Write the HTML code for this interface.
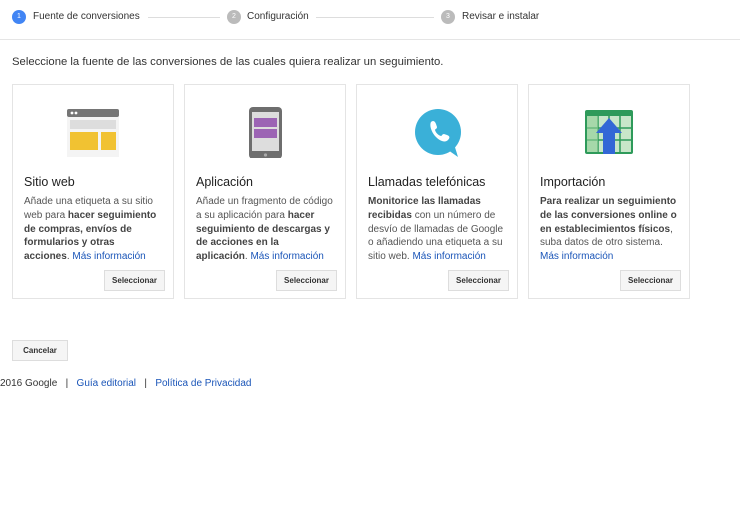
<!DOCTYPE html><html><head><meta charset="utf-8"><style>
body{margin:0;width:740px;height:509px;background:#fff;font-family:"Liberation Sans",sans-serif;color:#333;position:relative;overflow:hidden}
.a{position:absolute}
.step{font-size:10px;color:#333;top:11px}
.c{width:14px;height:14px;border-radius:50%;color:#fff;font-size:7px;text-align:center;line-height:14px;top:10px}
.ln{height:1px;background:#ddd;top:17px}
.card{top:84px;width:162px;height:215px;border:1px solid #e4e4e4;box-sizing:border-box}
.card h3{position:absolute;left:11px;top:90px;margin:0;font-weight:normal;font-size:12.5px;color:#222}
.card p{position:absolute;left:11px;top:110px;width:138px;margin:0;font-size:10px;line-height:13.8px;color:#555}
.card b{color:#444}
.card span{color:#1a55b8}
.btn{position:absolute;right:8px;top:185px;width:61px;height:21px;background:#f5f5f5;border:1px solid #ddd;box-sizing:border-box;font-size:8px;font-weight:bold;text-align:center;line-height:20px;color:#333}
.ic{position:absolute;left:51px;top:21px}
</style></head><body>
<div class="a c" style="left:12px;background:#4285f4">1</div>
<div class="a step" style="left:33px">Fuente de conversiones</div>
<div class="a ln" style="left:148px;width:72px"></div>
<div class="a c" style="left:227px;background:#bbb">2</div>
<div class="a step" style="left:247px">Configuración</div>
<div class="a ln" style="left:316px;width:118px"></div>
<div class="a c" style="left:441px;background:#bbb">3</div>
<div class="a step" style="left:462px">Revisar e instalar</div>
<div class="a" style="left:0;top:39px;width:740px;height:1px;background:#e5e5e5"></div>
<div class="a" style="left:12px;top:56px;font-size:11.3px;color:#333">Seleccione la fuente de las conversiones de las cuales quiera realizar un seguimiento.</div>

<div class="a card" style="left:12px">
<svg class="ic" width="60" height="52" viewBox="0 0 60 52"><rect x="3" y="3" width="52" height="48" fill="#f4f4f4"/><rect x="3" y="3" width="52" height="8" rx="2" fill="#757575"/><circle cx="8" cy="7" r="1.4" fill="#fff"/><circle cx="12" cy="7" r="1.4" fill="#fff"/><rect x="6" y="14" width="46" height="9" fill="#ddd"/><rect x="6" y="26" width="28" height="18" fill="#f1c232"/><rect x="37" y="26" width="15" height="18" fill="#f1c232"/></svg>
<h3>Sitio web</h3>
<p>Añade una etiqueta a su sitio web para <b>hacer seguimiento de compras, envíos de formularios y otras acciones</b>. <span>Más información</span></p>
<div class="btn">Seleccionar</div></div>

<div class="a card" style="left:184px">
<svg class="ic" width="60" height="52" viewBox="0 0 60 52"><rect x="13" y="1" width="33" height="52" rx="4" fill="#6e6e6e"/><rect x="16" y="6" width="27" height="39" fill="#ddd"/><rect x="18" y="12" width="23" height="9" fill="#9c64b4"/><rect x="18" y="23" width="23" height="9" fill="#9c64b4"/><circle cx="29.5" cy="49" r="1.6" fill="#aaa"/></svg>
<h3>Aplicación</h3>
<p>Añade un fragmento de código a su aplicación para <b>hacer seguimiento de descargas y de acciones en la<br>aplicación</b>. <span>Más información</span></p>
<div class="btn">Seleccionar</div></div>

<div class="a card" style="left:356px">
<svg class="ic" width="60" height="52" viewBox="0 0 60 52"><circle cx="30" cy="26" r="23" fill="#3ab0d8"/><path d="M40 44 L50 51 L46 38 Z" fill="#3ab0d8"/><path d="M23 16c2-2 4-1 5 2l1 3c0 2-2 2-2 3 1 3 3 5 6 6 1 0 1-2 3-2l3 1c3 1 3 3 1 5-3 3-8 1-12-3s-7-11-5-15z" fill="#fff"/></svg>
<h3>Llamadas telefónicas</h3>
<p><b>Monitorice las llamadas recibidas</b> con un número de desvío de llamadas de Google o añadiendo una etiqueta a su sitio web. <span>Más información</span></p>
<div class="btn">Seleccionar</div></div>

<div class="a card" style="left:528px">
<svg class="ic" width="60" height="52" viewBox="0 0 60 52"><rect x="5" y="4" width="48" height="44" rx="2" fill="#2e9a5a"/><rect x="7" y="10" width="44" height="36" fill="#c8e6c9"/><g stroke="#2e9a5a" stroke-width="1.5"><line x1="18" y1="10" x2="18" y2="46"/><line x1="29" y1="10" x2="29" y2="46"/><line x1="40" y1="10" x2="40" y2="46"/><line x1="7" y1="22" x2="51" y2="22"/><line x1="7" y1="34" x2="51" y2="34"/></g><rect x="7" y="10" width="11" height="36" fill="#8fcf96" opacity=".6"/><path d="M29 12 L42 27 L35 27 L35 48 L23 48 L23 27 L16 27 Z" fill="#3367d6"/></svg>
<h3>Importación</h3>
<p><b>Para realizar un seguimiento de las conversiones online o en establecimientos físicos</b>, suba datos de otro sistema. <span>Más información</span></p>
<div class="btn">Seleccionar</div></div>

<div class="a btn" style="left:12px;top:340px;width:56px;height:21px;right:auto">Cancelar</div>
<div class="a" style="left:0;top:378px;font-size:10px;color:#333">2016 Google &nbsp; | &nbsp; <span style="color:#1a55b8">Guía editorial</span> &nbsp; | &nbsp; <span style="color:#1a55b8">Política de Privacidad</span></div>
</body></html>
